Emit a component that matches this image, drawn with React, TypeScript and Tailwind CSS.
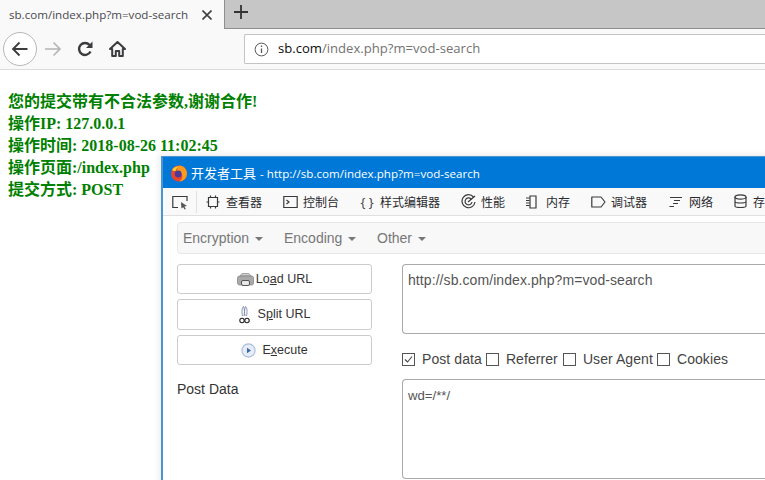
import React from "react";

const ui = "font-['Open_Sans','Noto_Sans_CJK_SC',sans-serif]";
const cjk = "font-['Noto_Sans_CJK_SC',sans-serif]";
const ar = "font-['Liberation_Sans',Arial,sans-serif]";

function Tool({ icon, label, w }: { icon: React.ReactNode; label: string; w: string }) {
  return (
    <div className={`flex items-center shrink-0 ${w}`}>
      <span className="w-[16px] h-[16px] flex items-center justify-center shrink-0">{icon}</span>
      <span className={`ml-[5px] text-[12px] leading-[16px] text-[#2a2a2e] whitespace-nowrap ${cjk}`}>{label}</span>
    </div>
  );
}

const S = { fill: "none", stroke: "#3a3a3d", strokeWidth: 1.2 };

function Menu({ label, w }: { label: string; w: string }) {
  return (
    <div className={`flex items-center shrink-0 ${w}`}>
      <span className="text-[14px] text-[#777777]">{label}</span>
      <span className="ml-[6px] mt-[2px] w-0 h-0 border-x-[4px] border-x-transparent border-t-[4px] border-t-[#777777]" />
    </div>
  );
}

function Btn({ h, icon, children }: { h: string; icon: React.ReactNode; children: React.ReactNode }) {
  return (
    <div className={`w-[195px] ${h} flex items-center justify-center border border-[#cccccc] rounded-[3px] bg-white text-[12.5px] text-[#333333] ${ar}`}>
      {icon}
      <span className="whitespace-nowrap">{children}</span>
    </div>
  );
}

function Check({ checked }: { checked?: boolean }) {
  return (
    <span className="w-[13px] h-[13px] border border-[#555555] bg-white flex items-center justify-center shrink-0">
      {checked && (
        <svg width="11" height="11" viewBox="0 0 11 11">
          <path d="M2 5.5 L4.5 8 L9 2.5" fill="none" stroke="#444" strokeWidth="1.1" />
        </svg>
      )}
    </span>
  );
}

export default function App() {
  return (
    <div className="relative w-[765px] h-[480px] overflow-hidden bg-white">
      {/* tab strip */}
      <div className="flex h-[29px] bg-[#c6c6c6] border-b border-[#8f8f8f]">
        <div className={`w-[224px] h-[29px] bg-[#f9f9f9] flex items-center pl-[9px] shrink-0 ${ui}`}>
          <span className="w-[184px] text-[11.6px] text-[#4a4a4f] whitespace-nowrap">sb.com/index.php?m=vod-search</span>
          <svg className="ml-[9px]" width="10" height="10" viewBox="0 0 10 10">
            <path d="M0.5 0.5 L9.5 9.5 M9.5 0.5 L0.5 9.5" stroke="#3f3f42" strokeWidth="1.6" />
          </svg>
        </div>
        <div className="w-[1px] h-[28px] bg-[#8f8f8f] shrink-0" />
        <div className="w-[32px] flex items-center justify-center shrink-0 pb-[4px]">
          <svg width="14" height="14" viewBox="0 0 14 14">
            <path d="M7 0 V14 M0 7 H14" stroke="#333" strokeWidth="1.8" />
          </svg>
        </div>
      </div>

      {/* toolbar */}
      <div className="flex items-center h-[41px] bg-[#f9f9f9] border-b border-[#dddddd]">
        <div className="ml-[3px] w-[34px] h-[34px] rounded-full border border-[#b8b8b8] bg-white flex items-center justify-center shrink-0">
          <svg width="18" height="16" viewBox="0 0 18 16">
            <path d="M16.5 8 H2 M8.5 1.5 L2 8 L8.5 14.5" fill="none" stroke="#3c3c3f" strokeWidth="1.8" />
          </svg>
        </div>
        <svg className="ml-[7px] shrink-0" width="18" height="16" viewBox="0 0 18 16">
          <path d="M1 8 H16 M9.5 1.5 L16 8 L9.5 14.5" fill="none" stroke="#b4b4b4" strokeWidth="1.6" />
        </svg>
        <svg className="ml-[15px] shrink-0" width="16" height="16" viewBox="0 0 16 16">
          <path d="M13.5 10.5 A6 6 0 1 1 12.6 4" fill="none" stroke="#3c3c3f" strokeWidth="2.4" />
          <path d="M15.5 0.5 V7 H9 Z" fill="#3c3c3f" />
        </svg>
        <svg className="ml-[16px] shrink-0" width="17" height="16" viewBox="0 0 17 16">
          <path d="M8.5 1 L16 8 H13.8 V15 H10.2 V10 H6.8 V15 H3.2 V8 H1 Z" fill="none" stroke="#3c3c3f" strokeWidth="2" strokeLinejoin="round" />
        </svg>
        <div className={`ml-[118px] flex-1 h-[30px] bg-white border border-[#c4c4c4] border-r-0 rounded-l-[2px] flex items-center pl-[9px] ${ui}`}>
          <svg width="15" height="15" viewBox="0 0 15 15" className="shrink-0">
            <circle cx="7.5" cy="7.5" r="6.4" fill="none" stroke="#5a5a5d" strokeWidth="1" />
            <path d="M7.5 6.5 V11 M7.5 3.6 V5" stroke="#5a5a5d" strokeWidth="1.3" />
          </svg>
          <span className="ml-[9px] text-[13.1px] text-[#0c0c0d] whitespace-nowrap">
            sb.com<span className="text-[#737373]">/index.php?m=vod-search</span>
          </span>
        </div>
      </div>

      {/* page */}
      <div className="pt-[21px] pl-[8px] text-[16px] leading-[22px] font-bold text-[#008000] font-['Liberation_Serif','Noto_Sans_CJK_SC',serif]">
        <div>您的提交带有不合法参数,谢谢合作!</div>
        <div>操作IP: 127.0.0.1</div>
        <div>操作时间: 2018-08-26 11:02:45</div>
        <div>操作页面:/index.php</div>
        <div>提交方式: POST</div>
      </div>

      {/* devtools window, floating over the page */}
      <div className={`absolute left-[161px] top-[156px] w-[640px] h-[340px] bg-white border-l-2 border-t border-[#4a94cf] shadow-[-2px_-2px_6px_rgba(0,0,0,0.08)] ${ar}`}>
        <div className="h-[31px] bg-[#0078d7] flex items-center pl-[7px]">
          <svg width="18" height="18" viewBox="0 0 18 18" className="shrink-0">
            <circle cx="9" cy="9.5" r="8" fill="#e8452c" />
            <path d="M9 1.5 A8 8 0 0 1 17 9.5 A8 8 0 0 1 9 17.5 C12.5 15.5 13 12 11.5 9.5 C10.5 7.5 8 7 6.5 7 C7 5 8 3 9 1.5 Z" fill="#ff9a1f" />
            <circle cx="8.2" cy="10" r="3.4" fill="#4b3a9a" />
            <path d="M2 6 C4 3 7 2 9 2.4 C7 3.6 6 5 5.5 7 C4 7 3 7 2 6 Z" fill="#ffcb2f" />
          </svg>
          <span className={`ml-[3px] text-[11.6px] text-white whitespace-nowrap ${ui}`}>
            <span className={`text-[13px] mr-[1px] ${cjk}`}>开发者工具</span> - http://sb.com/index.php?m=vod-search
          </span>
        </div>

        <div className="h-[28px] bg-[#f9f9f9] border-b border-[#e0e0e2] flex items-center pl-[9px]">
          <svg width="16" height="16" viewBox="0 0 16 16" className="shrink-0">
            <path d="M6 13.5 H0.8 V2.5 H15 V7" fill="none" stroke="#3a3a3d" strokeWidth="1.2" />
            <path d="M9 8 L15 12 L12.4 12.6 L13.8 15 L12.6 15.6 L11.2 13.2 L9.4 14.6 Z" fill="#555" />
          </svg>
          <div className="w-px h-[22px] bg-[#e0e0e2] ml-[8px] mr-[8px] shrink-0" />
          <Tool w="w-[77px]" label="查看器" icon={<svg width="14" height="14" viewBox="0 0 14 14"><path d="M2.5 2.5 H11.5 V11.5 H2.5 Z M4.5 0.5 V2.5 M9.5 0.5 V2.5 M4.5 11.5 V13.5 M9.5 11.5 V13.5 M0.5 7 H2.5 M11.5 7 H13.5" {...S} /></svg>} />
          <Tool w="w-[77px]" label="控制台" icon={<svg width="15" height="14" viewBox="0 0 15 14"><path d="M0.8 1.5 H14.2 V12.5 H0.8 Z M3.5 5 L6 7 L3.5 9" {...S} /></svg>} />
          <Tool w="w-[101px]" label="样式编辑器" icon={<span className={`text-[13px] leading-[16px] text-[#3a3a3d] whitespace-nowrap ${ui}`}>{"{ }"}</span>} />
          <Tool w="w-[65px]" label="性能" icon={<svg width="15" height="15" viewBox="0 0 15 15"><path d="M12.5 3 A6.5 6.5 0 1 0 14 8" {...S} /><path d="M10.5 5.5 A3.5 3.5 0 1 0 11 8" {...S} /><path d="M7 8 L14 2" {...S} /></svg>} />
          <Tool w="w-[65px]" label="内存" icon={<svg width="16" height="14" viewBox="0 0 16 14"><path d="M5 1 H11 V13 H5 Z" {...S} /><path d="M1 3 H4.5 M1 5.5 H4.5 M1 8 H4.5 M1 10.5 H4.5" stroke="#3a3a3d" strokeWidth="1" /></svg>} />
          <Tool w="w-[78px]" label="调试器" icon={<svg width="15" height="12" viewBox="0 0 15 12"><path d="M0.8 1 H10 L14 6 L10 11 H0.8 Z" {...S} strokeLinejoin="round" /></svg>} />
          <Tool w="w-[64px]" label="网络" icon={<svg width="14" height="12" viewBox="0 0 14 12"><path d="M1 1.5 H13 M5 4.5 H11 M4 7.5 H9 M0.5 10.5 H5" {...S} /></svg>} />
          <Tool w="w-[34px]" label="存" icon={<svg width="13" height="15" viewBox="0 0 13 15"><ellipse cx="6.5" cy="3" rx="5.5" ry="2.2" {...S} /><path d="M1 3 V12 C1 14 12 14 12 12 V3 M1 7.5 C1 9.5 12 9.5 12 7.5" {...S} /></svg>} />
        </div>

        <div className="pl-[14px] pt-[6px]">
          <div className="h-[32px] bg-[#f8f8f8] border border-[#e7e7e7] rounded-[4px] flex items-center pl-[5px]">
            <Menu w="w-[101px]" label="Encryption" />
            <Menu w="w-[93px]" label="Encoding" />
            <Menu w="w-[60px]" label="Other" />
          </div>

          <div className="flex mt-[10px]">
            <div className="flex flex-col w-[225px] shrink-0">
              <div className="flex flex-col gap-[5px]">
                <Btn h="h-[30px]" icon={
                  <svg width="17" height="16" viewBox="0 0 17 16" className="mr-[2px] mt-[2px]">
                    <path d="M3 4 L5 1.5 H12 L14 4 Z" fill="#cfcfcf" stroke="#8a8a8a" strokeWidth="0.7" />
                    <rect x="0.5" y="4" width="16" height="9" rx="2" fill="#a9a9a9" stroke="#7f7f7f" strokeWidth="0.7" />
                    <rect x="4.5" y="8.5" width="8" height="5" rx="1.5" fill="#e8e8e8" stroke="#555" strokeWidth="1" />
                  </svg>
                }>Lo<span className="underline">a</span>d URL</Btn>
                <Btn h="h-[31px]" icon={
                  <svg width="11" height="18" viewBox="0 0 11 18" className="mr-[8px]">
                    <path d="M3.5 10 C2.5 6 3 1 4.5 0.5 C5.5 3 5.5 7 6 10 M7.5 10 C8.5 6 8 1 6.5 0.5 C5.5 3 5.5 7 5 10" fill="none" stroke="#7a8ba8" strokeWidth="0.9" />
                    <circle cx="3" cy="14.5" r="2.2" fill="none" stroke="#222" strokeWidth="1.1" />
                    <circle cx="8" cy="14.5" r="2.2" fill="none" stroke="#222" strokeWidth="1.1" />
                  </svg>
                }>S<span className="underline">p</span>lit URL</Btn>
                <Btn h="h-[30px]" icon={
                  <svg width="15" height="15" viewBox="0 0 15 15" className="mr-[6px]">
                    <circle cx="7.5" cy="7.5" r="6.6" fill="#e6edf8" stroke="#a9bcd9" strokeWidth="1.1" />
                    <path d="M6 4.8 L10 7.5 L6 10.2 Z" fill="#3f68a8" />
                  </svg>
                }>E<span className="underline">x</span>ecute</Btn>
              </div>
              <div className="mt-[15px] text-[14px] leading-[18px] text-[#333333]">Post Data</div>
            </div>

            <div className="flex-1 flex flex-col min-w-0">
              <div className="h-[70px] border border-[#aaaaaa] border-r-0 rounded-l-[4px] bg-white pl-[5px] pt-[7px] text-[14px] tracking-[0.08px] leading-[17px] text-[#555555]">
                http://sb.com/index.php?m=vod-search
              </div>
              <div className="h-[45px] pt-[5px] flex items-center text-[14px] tracking-[0.08px] text-[#444444] whitespace-nowrap">
                <Check checked />
                <span className="ml-[7px] mr-[4px]">Post data</span>
                <Check />
                <span className="ml-[7px] mr-[5px]">Referrer</span>
                <Check />
                <span className="ml-[7px] mr-[4px]">User Agent</span>
                <Check />
                <span className="ml-[7px]">Cookies</span>
              </div>
              <div className="h-[100px] border border-[#aaaaaa] border-r-0 rounded-l-[4px] bg-white pl-[5px] pt-[8px] text-[13.2px] leading-[16px] text-[#555555]">
                wd=/**/
              </div>
            </div>
          </div>
        </div>
      </div>
    </div>
  );
}
